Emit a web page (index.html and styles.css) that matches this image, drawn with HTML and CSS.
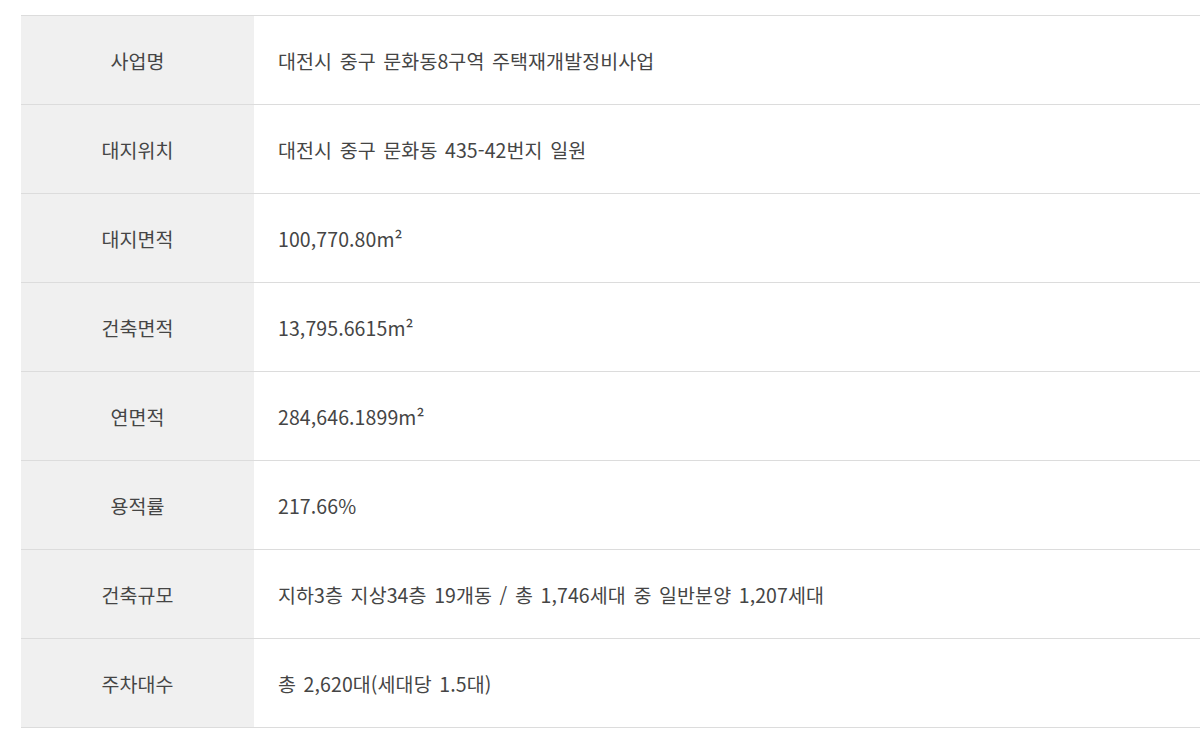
FILE: index.html
```html
<!DOCTYPE html>
<html lang="ko">
<head>
    <meta charset="utf-8">
    <title>사업개요</title>
    <link rel="stylesheet" href="styles.css">
</head>
<body>
    <!-- 사업 개요 표 -->
    <table class="info-table">
        <tbody>
            <tr>
                <th>사업명</th>
                <td>대전시 중구 문화동8구역 주택재개발정비사업</td>
            </tr>
            <tr>
                <th>대지위치</th>
                <td>대전시 중구 문화동 435-42번지 일원</td>
            </tr>
            <tr>
                <th>대지면적</th>
                <td>100,770.80m²</td>
            </tr>
            <tr>
                <th>건축면적</th>
                <td>13,795.6615m²</td>
            </tr>
            <tr>
                <th>연면적</th>
                <td>284,646.1899m²</td>
            </tr>
            <tr>
                <th>용적률</th>
                <td>217.66%</td>
            </tr>
            <tr>
                <th>건축규모</th>
                <td>지하3층 지상34층 19개동 / 총 1,746세대 중 일반분양 1,207세대</td>
            </tr>
            <tr>
                <th>주차대수</th>
                <td>총 2,620대(세대당 1.5대)</td>
            </tr>
        </tbody>
    </table>
</body>
</html>
```

FILE: styles.css
```css
body {
    margin: 0;
    padding: 15px 0 0 21px;
    background: #fff;
    font-family: "Noto Sans CJK KR", "Noto Sans", sans-serif;
    color: #454545;
}

.info-table {
    width: 100%;
    border-collapse: collapse;
    border-top: 1px solid #dcdcdc;
}

.info-table th,
.info-table td {
    height: 88px;
    padding: 0;
    border-bottom: 1px solid #dcdcdc;
    font-size: 19.5px;
    font-weight: normal;
    letter-spacing: 0.1px;
    word-spacing: 2px;
    vertical-align: middle;
}

.info-table th {
    width: 233px;
    background-color: #f0f0f0;
    text-align: center;
}

.info-table td {
    padding-left: 24px;
    text-align: left;
}
```
